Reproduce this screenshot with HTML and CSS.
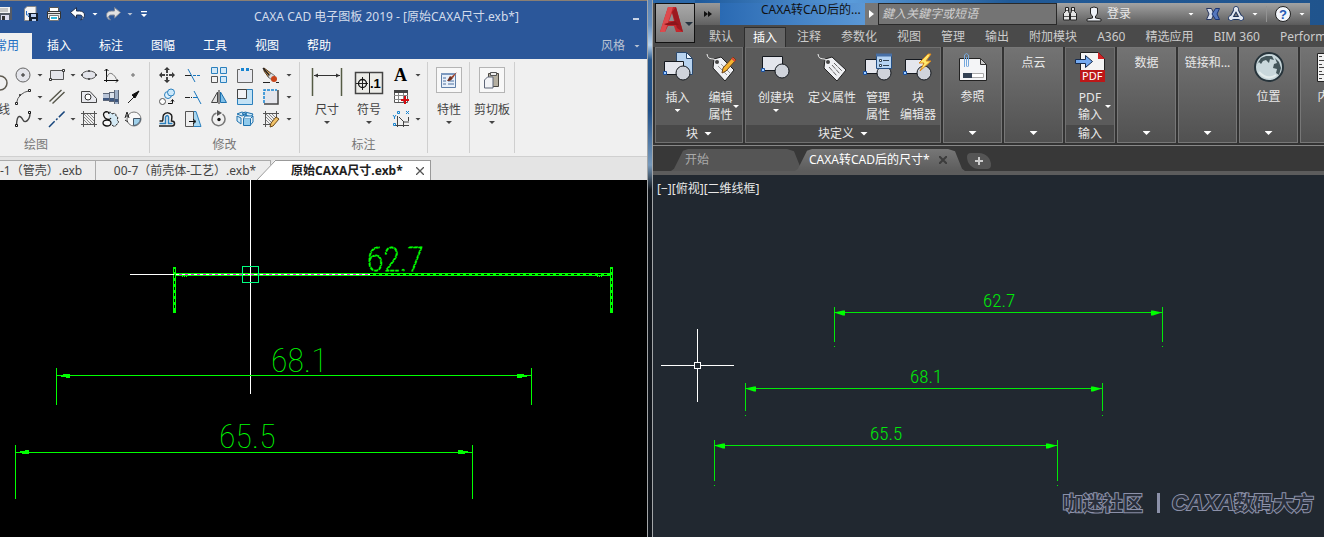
FILE: index.html
```html
<!DOCTYPE html>
<html lang="zh-CN">
<head>
<meta charset="utf-8">
<title>CAXA CAD 电子图板 2019</title>
<link rel="stylesheet" href="styles.css">
</head>
<body>
<main class="desktop">
<section class="caxa" aria-label="CAXA CAD">
  <header class="caxa-title">
    <div class="qat">
      <button class="q-save" aria-label="保存"><svg width="14" height="16" viewBox="0 0 14 16"><path d="M0 1h12v13H0z" fill="#555b66"/><path d="M0 1h10v6H0z" fill="#f2f2f2"/><path d="M1 9h8v5H1z" fill="#dde"/><path d="M2 10h3v4H2z" fill="#333"/><path d="M0 3h8M0 5h8" stroke="#999"/></svg></button>
      <button class="q-as" aria-label="另存为"><svg width="16" height="16" viewBox="0 0 16 16"><path d="M4 0.500h9v10H8v4H1.500V3z" fill="#f4f4f4" stroke="#888"/><path d="M3.500 5v4h3M5 7l2 2-2 2" fill="none" stroke="#2b6fc0"/><path d="M6 7h9v8H6z" fill="#152030"/><path d="M8 8h5v3H8zM9 13h4v2H9z" fill="#b8cdf0"/></svg></button>
      <button class="q-print" aria-label="打印"><svg width="16" height="16" viewBox="0 0 16 16"><path d="M3.500 1.500h9v4h-9z" fill="#fff" stroke="#555"/><path d="M1.500 5.500h13v7h-13z" fill="#e4e4e4" stroke="#333"/><path d="M2 7.500h12" stroke="#444"/><path d="M3.500 9.500h9v5h-9z" fill="#fff" stroke="#777"/><path d="M5 12h6" stroke="#32b7d8" stroke-width="2"/></svg></button>
      <button class="q-undo" aria-label="撤销"><svg width="16" height="16" viewBox="0 0 16 16"><path d="M0.500 6.500l6-5v3.500h3c7 0 6 8 1 9 3-3 2-5-1-5h-3v3z" fill="#fff" stroke="#1f2f4d"/></svg></button>
      <i class="dn light"></i>
      <button class="q-redo" aria-label="重做"><svg width="16" height="16" viewBox="0 0 16 16"><path d="M15.500 6.500l-6-5v3.500h-3c-7 0-6 8-1 9-3-3-2-5 1-5h3v3z" fill="#e2e2e2" stroke="#7c8698"/></svg></button>
      <i class="dn dim"></i>
      <i class="dn light bar"></i>
    </div>
    <h1 class="caxa-name">CAXA CAD 电子图板 2019 - [原始CAXA尺寸.exb*]</h1>
    <button class="minimize" aria-label="最小化"></button>
  </header>
  <nav class="caxa-menu">
    <button class="menu current">常用</button><button class="menu">插入</button><button class="menu">标注</button><button class="menu">图幅</button><button class="menu">工具</button><button class="menu">视图</button><button class="menu">帮助</button>
    <button class="style-menu">风格<i class="dn dim"></i></button>
  </nav>
  <div class="caxa-ribbon">
    <div class="group draw">
      <div class="icons draw-icons">
        <button class="line-tool"><svg width="9" height="22" viewBox="0 0 9 22"><path d="M0 4a7 7 0 0 1 0 14" fill="none" stroke="#5f5a50" stroke-width="1.500"/></svg><span>线</span></button>
        <button aria-label="圆"><svg viewBox="0 0 18 18"><circle cx="9" cy="9" r="7" fill="#e4e5eb" stroke="#666"/><path d="M8 8h2v2h-2z" fill="#fff" stroke="#222"/></svg></button><i class="dn"></i>
        <button aria-label="矩形"><svg viewBox="0 0 18 18"><path d="M2.500 4.500h13v9h-13z" fill="#e3e4ea" stroke="#555"/><path d="M14.500 3.500h2v2h-2zM1.500 12.500h2v2h-2z" fill="#fff" stroke="#333"/></svg></button><i class="dn"></i>
        <button aria-label="椭圆"><svg viewBox="0 0 18 18"><ellipse cx="9" cy="9" rx="7" ry="4" fill="#e3e4ea" stroke="#555"/><path d="M1.500 8.500h1v1h-1zM15.500 8.500h1v1h-1zM8.500 4.500h1v1h-1zM8.500 12.500h1v1h-1z" fill="#fff" stroke="#333"/></svg></button>
        <button aria-label="公式曲线"><svg viewBox="0 0 18 18"><path d="M4.500 3v13M2 14.500h14M2.500 5l2-2 2 2M14 12.500l2 2-2 2" stroke="#111" fill="none"/><path d="M5 11c2-5 5-5 9 1" stroke="#777" fill="none"/></svg></button>
        <button aria-label="点"><svg viewBox="0 0 18 18"><path d="M8 8h2v2h-2z" fill="#fff" stroke="#666"/></svg></button>
        <button aria-label="圆弧"><svg viewBox="0 0 18 18"><path d="M2.500 15Q4 5 16 2.500" stroke="#555" fill="none"/><path d="M1.500 14.500h2v2h-2zM14.500 1.500h2v2h-2zM5.500 6.500h1v1h-1z" fill="#fff" stroke="#222"/></svg></button><i class="dn"></i>
        <button aria-label="平行线"><svg viewBox="0 0 18 18"><path d="M1.500 13.500L13.500 2M4.500 15.500L16.500 4" stroke="#56564a" stroke-width="1.400"/></svg></button><i></i>
        <button aria-label="多边形"><svg viewBox="0 0 18 18"><path d="M1.500 3.500h8.500l6.500 7v4h-15z" fill="#e8e9ee" stroke="#444"/><circle cx="8" cy="9" r="3" fill="#fff" stroke="#333"/></svg></button>
        <button aria-label="轴"><svg viewBox="0 0 18 18"><path d="M1 5h6v8H1z" fill="#b9c5d8"/><path d="M7 4h5v10H7z" fill="#dbe2ec"/><path d="M12 2h5v14h-5z" fill="#9fb0c8"/><path d="M1 10h6v2H1zM7 10h5v3H7zM12 11h5v3h-5z" fill="#3e577f"/><path d="M1 5.500h6M1 12.500h6M7.500 4v10M12.500 2v14M7 4.500h5M7 13.500h5M16.500 2v14" stroke="#5c6678" fill="none"/></svg></button>
        <button aria-label="箭头"><svg viewBox="0 0 18 18"><path d="M4 15l7-7" stroke="#222"/><path d="M15 3L8 7l3 3z" fill="#111" stroke="#111"/></svg></button>
        <button aria-label="样条"><svg viewBox="0 0 18 18"><path d="M2.500 15C3 3 7 6 9 10s7 0 7-7" stroke="#444" fill="none" stroke-width="1.400"/><path d="M1.500 14.500h2v2h-2zM14.500 1.500h2v2h-2z" fill="#fff" stroke="#111"/></svg></button><i class="dn"></i>
        <button aria-label="中心线"><svg viewBox="0 0 18 18"><path d="M1 17L17 1" stroke="#16457c" stroke-width="1.500" stroke-dasharray="8 2 2 2"/></svg></button><i class="dn"></i>
        <button aria-label="填充"><svg viewBox="0 0 18 18"><path d="M3.500 1v16M14.500 1v16M1 3.500h16M1 14.500h16" stroke="#555"/><path d="M4 10l4 4M4 7l7 7M4 4l10 10M7 4l7 7M10 4l4 4" stroke="#888"/></svg></button>
        <button aria-label="局部放大"><svg viewBox="0 0 18 18"><path d="M6 3q3-2 4 1 4-2 4 2 3 1 1 4 3 2 0 4-2 4-5 1" fill="#d4e9f4" stroke="#222" stroke-dasharray="3 1"/><path d="M3 2q-3 2 0 6M3 2q4-1 4 2 M3 8q4 3 6 0" fill="none" stroke="#111" stroke-width="1.300"/><ellipse cx="5" cy="13" rx="4" ry="3" fill="#f6f6f6" stroke="#111" stroke-width="1.300"/></svg></button>
        <button aria-label="局部视图"><svg viewBox="0 0 18 18"><circle cx="10" cy="9" r="7" fill="#f8f8f8" stroke="#777"/><path d="M9.500 8.500h7a7 7 0 0 1-7 7z" fill="#9fd0ea" stroke="#456"/><path d="M1 8l2-6 2 6M2 6h3M1 10l3 2" fill="none" stroke="#222"/></svg></button>
      </div>
      <div class="group-name draw-name">绘图</div>
    </div>
    <div class="group modify">
      <div class="icons modify-icons">
        <button aria-label="平移"><svg viewBox="0 0 18 18"><path d="M9 1l3 3H6zM9 17l3-3H6zM1 9l3-3v6zM17 9l-3-3v6z" fill="#333"/><path d="M9 3v4M9 11v4M3 9h4M11 9h4" stroke="#444" stroke-width="2"/><path d="M8 8h2v2H8z" fill="#555"/></svg></button>
        <button aria-label="裁剪"><svg viewBox="0 0 18 18"><path d="M1 9.500h6" stroke="#222"/><path d="M4 3l7 13" stroke="#1976bd" fill="none"/><path d="M9 9.500h8" stroke="#1976bd" stroke-dasharray="3 1"/></svg></button>
        <button aria-label="阵列"><svg viewBox="0 0 18 18"><path d="M1.500 1.500h6v6h-6zM10.500 1.500h6v6h-6zM10.500 10.500h6v6h-6z" fill="#d3e9f8" stroke="#2b80bd"/><path d="M1.500 10.500h6v6h-6z" fill="#f3f3f3" stroke="#555"/></svg></button>
        <button aria-label="打断"><svg viewBox="0 0 18 18"><path d="M4 3.500H1.500v13h15v-13H14" fill="#e9eaef" stroke="#666"/><path d="M5 2h3v3H5zM10 2h3v3h-3z" fill="#1784d1"/></svg></button>
        <button aria-label="删除"><svg viewBox="0 0 18 18"><path d="M2 2l8 6-3 4-5-7z" fill="#dcae6c" stroke="#5b3b1a"/><path d="M1 2l7 8" stroke="#292320" stroke-width="1.500"/><path d="M9 7l4 3-3 4-4-3z" fill="#ddd" stroke="#777"/><circle cx="12" cy="13" r="3" fill="#c9451a"/><path d="M1 16.500h7M14 16.500h3" stroke="#222"/></svg></button><i class="dn"></i>
        <button aria-label="复制"><svg viewBox="0 0 18 18"><circle cx="4.500" cy="13.500" r="3" fill="#fff" stroke="#555"/><circle cx="10" cy="7" r="3.500" fill="#e0f1fc" stroke="#2b80bd"/><circle cx="13" cy="4.500" r="3.500" fill="#cce8fa" stroke="#2b80bd"/><path d="M10 15.500h4.500V12M13 13.500l1.500-2 1.500 2" stroke="#111" fill="none"/></svg></button>
        <button aria-label="延伸"><svg viewBox="0 0 18 18"><path d="M1 9.500h7" stroke="#222" stroke-dasharray="5 1"/><path d="M10 3l7 13" stroke="#1976bd"/><path d="M9 9.500h4" stroke="#1976bd"/></svg></button>
        <button aria-label="镜像"><svg viewBox="0 0 18 18"><path d="M7.500 4v10.500h-6z" fill="#e2e2e2" stroke="#444"/><path d="M10.500 4v10.500h6z" fill="#7fbfe8" stroke="#1c70ad"/><path d="M9 2v14" stroke="#222"/></svg></button>
        <button aria-label="缩放"><svg viewBox="0 0 18 18"><path d="M1.500 1.500h15v15h-15z" fill="#c3e2f5" stroke="#2b80bd"/><path d="M1.500 1.500h9v9h-9z" fill="#f2f2f4" stroke="#444"/></svg></button>
        <button aria-label="拉伸"><svg viewBox="0 0 18 18"><path d="M2.500 2.500h13v13h-13z" fill="#e5e6ec"/><path d="M16 2v14H2" fill="none" stroke="#444" stroke-width="1.500"/><path d="M2 15V2h13" fill="none" stroke="#1784d1" stroke-width="1.500" stroke-dasharray="3 1"/></svg></button><i class="dn"></i>
        <button aria-label="等距"><svg viewBox="0 0 18 18"><path d="M1.500 11h3c1-2 0-4 1-6 2-3 6-3 8 0 1 2 0 4 0 6q3 0 3 2.500T14 16H1" fill="none" stroke="#222" stroke-width="1.500"/><path d="M1.500 13.500h6V7q2-3 3 0v6.500h4" fill="none" stroke="#2b80bd" stroke-width="1.500"/></svg></button>
        <button aria-label="拉长"><svg viewBox="0 0 18 18"><path d="M9 1.500h3l5 15H9z" fill="#a8d7f1" stroke="#2b80bd"/><path d="M1.500 1.500h8v15h-8z" fill="#eee" stroke="#555"/><path d="M5 11.500h6M9 9l3 2.500-3 2.500" stroke="#111" fill="none"/></svg></button>
        <button aria-label="旋转"><svg viewBox="0 0 18 18"><path d="M6.500 3a6.500 6.500 0 1 0 6 1" fill="none" stroke="#777" stroke-width="1.500"/><path d="M7 0l5 3-5 3z" fill="#555"/><circle cx="9" cy="9.500" r="1.700" fill="#111"/></svg></button>
        <button aria-label="分解"><svg viewBox="0 0 18 18"><path d="M1 6l4 2v6l-4-3zM6 4l3-2 8 2-2 3zM1 4l5-2 5 2-5 2z" fill="#cfe8f7" stroke="#1c70ad"/><path d="M7.500 8.500h7v7h-7z" fill="#8fcaec" stroke="#1c70ad"/><path d="M7.500 8.500L9 6h8l-2.500 2.500M17 6v6l-2.500 3" fill="#e4f3fc" stroke="#1c70ad"/></svg></button>
        <button aria-label="填充编辑"><svg viewBox="0 0 18 18"><path d="M3.500 1v16M14.500 1v8M1 3.500h16M1 14.500h8" stroke="#555"/><path d="M4 10l4 4M4 7l6 6M4 4l8 8M7 4l6 6M10 4l4 4" stroke="#888"/><path d="M14 7l3 2-6 7-3 1 1-4z" fill="#f1c267" stroke="#6b4818"/></svg></button><i class="dn"></i>
      </div>
      <div class="group-name">修改</div>
    </div>
    <div class="group note">
      <div class="note-row">
        <button class="big"><svg width="34" height="32" viewBox="0 0 34 32"><path d="M2.500 2v28M31.500 2v28" stroke="#555b45" stroke-width="1.500"/><path d="M4 9.500h26" stroke="#333"/><path d="M4 9.500l4-2v4zM30 9.500l-4-2v4z" fill="#333"/></svg><span>尺寸</span><i class="dn"></i></button>
        <button class="big"><svg width="30" height="32" viewBox="0 0 30 32"><path d="M1.500 6.500h27v21h-27z" fill="#ecece8" stroke="#444" stroke-width="1.500"/><path d="M15.500 7v20M2 17.500h12M8.500 11v13" stroke="#222"/><circle cx="8.500" cy="17.500" r="4" fill="none" stroke="#111" stroke-width="1.300"/><text class="tol" x="16" y="22">.1</text></svg><span>符号</span><i class="dn"></i></button>
        <div class="note-icons">
          <button aria-label="文字"><svg viewBox="0 0 18 18"><text class="serif-a" x="2" y="15">A</text></svg></button><i class="dn"></i>
          <button aria-label="表格"><svg viewBox="0 0 18 18"><path d="M2.500 2.500h13v12h-13z" fill="#fff" stroke="#555"/><path d="M2 3.500h14" stroke="#444" stroke-width="3"/><path d="M2 7.500h14M2 11.500h14M6.500 5v9M11.500 5v9" stroke="#888"/><path d="M13 8v8M9 12h8" stroke="#d50d12" stroke-width="2"/></svg></button><i></i>
          <button aria-label="坐标标注"><svg viewBox="0 0 18 18"><path d="M5.500 6v11M2 15.500h15M7 7l5 5h5M11.500 12v5M16.500 7v4" stroke="#444" fill="none"/><path d="M5.500 1.500h2v2h-2zM14 1l3 3m0-3l-3 3M1 5l1.500 2L4 5M2.500 7v2M1.500 13.500h2v2h-2z" stroke="#1784d1" fill="none"/></svg></button><i class="dn"></i>
        </div>
      </div>
      <div class="group-name">标注</div>
    </div>
    <div class="group prop">
      <button class="big"><span class="framed"><svg width="24" height="24" viewBox="1 1 24 24"><path d="M5.500 6.500h14v14h-14z" fill="#e8f0fa" stroke="#5f7fa8"/><path d="M5 7h15" stroke="#7c99bf" stroke-width="2"/><path d="M7 11h3M7 14h3M7 17h3M12 14h6M12 17h6" stroke="#4d70a0"/><path d="M21 5l-6 5 2 1 4-6z" fill="#a34024"/><path d="M14 9l3 2c-2 3-4 3-6 3z" fill="#6f3020"/></svg></span><span>特性</span><i class="dn"></i></button>
    </div>
    <div class="group clip">
      <button class="big"><span class="framed"><svg width="24" height="24" viewBox="1 1 24 24"><path d="M9.500 6.500h10v13h-10z" fill="#b5afa0" stroke="#4a4741"/><path d="M11.500 5.500h6v3h-6z" fill="#eee" stroke="#555"/><path d="M5.500 13l3-3h5.500v11H5.500z" fill="#f2f3f6" stroke="#5f6678"/></svg></span><span>剪切板</span><i class="dn"></i></button>
    </div>
  </div>
  <nav class="caxa-docs">
    <button class="doc first">-1（管壳）.exb</button>
    <button class="doc second">00-7（前壳体-工艺）.exb*</button>
    <div class="doc-active"><svg class="slant" width="18" height="20" viewBox="0 0 18 20"><path d="M0 20L18 0v20z" fill="#fff"/><path d="M0 20L18 1" stroke="#999"/></svg><span class="doc-text">原始CAXA尺寸.exb*</span><button class="close" aria-label="关闭"><svg width="8" height="8" viewBox="0 0 8 8"><path d="M0 0l8 8M8 0L0 8" stroke="#555" stroke-width="1.300"/></svg></button></div>
  </nav>
  <div class="caxa-canvas">
    <svg class="scene" aria-label="CAXA 图纸"><g transform="translate(0 -180)" class="crisp">
      <path class="sel" d="M173 274.500H613M174.500 267V313M611.500 267V313"/>
      <path class="sel-gap" d="M370 274.500H610M174.500 269V311M611.500 269V311"/>
      <path d="M176 274.500H370" stroke="#f0f"/><path d="M176 274.500H370" stroke="#fff" stroke-dasharray="3 3"/>
      <path d="M182 276.500h6M597 276.500h5" stroke="#0f0" stroke-dasharray="1 1"/>
      <path d="M130 274.500H174M250.500 180V394" stroke="#fff"/>
      <path d="M242.500 266.500h16v16h-16z" fill="none" stroke="#00ff80"/>
      <path class="green" d="M56.500 368V405M531.500 368V405M57 375.500H531M15.500 445V499M472.500 445V499M16 452.500H472"/>
      <path d="M61 375h2v-1h7v4h-4v-1h-5zM527 375h-3v-1h-7v4h5v-1h5zM20 451h5v-1h4v4h-7v-1h-2zM468 451h-5v-1h-5v4h7v-1h3z" fill="#0f0"/>
      </g><g transform="translate(0 -180)">
      <text class="dim-l selected" x="367" y="271">62.7</text>
      <text class="dim-l" x="271" y="372">68.1</text>
      <text class="dim-l" x="219" y="448">65.5</text>
    </g></svg>
  </div>
</section>

<section class="acad" aria-label="AutoCAD">
  <div class="glass"></div>
  <div class="acad-body">
  <header class="acad-head">
    <button class="app" aria-label="应用程序菜单"><svg width="38" height="38" viewBox="0 0 38 38"><path d="M12 3h8l7 25h-7l-2-6H12l-3 6H4z" fill="#c4272c"/><path d="M12 3h5L9 28H4z" fill="#dd4a4d"/><path d="M16 9l2 8h-5z" fill="#8f8f8f"/><path d="M20 3l7 25-6-4-5-16z" fill="#9c191f"/><path d="M8 20l11-3 4 4H10z" fill="#8d151b"/><path d="M29 18h8l-4 4z" fill="#26333f"/></svg></button>
    <div class="acad-title">
      <button class="more" aria-label="更多"><svg width="8" height="6" viewBox="0 0 8 6"><path d="M0 0l4 3-4 3zM4 0l4 3-4 3z" fill="#111"/></svg></button>
      <span class="acad-name">CAXA转CAD后的...</span>
      <button class="expand" aria-label="展开"><svg width="5" height="8" viewBox="0 0 5 8"><path d="M0 0l5 4-5 4z" fill="#fff"/></svg></button>
      <input class="search" type="text" aria-label="搜索" placeholder="鍵入关鍵字或短语">
      <div class="info">
        <button aria-label="搜索"><svg width="16" height="16" viewBox="0 0 16 16"><path d="M3.500 1.500h3v4l1 2v6.500h-6V7.500l2-2zM9.500 1.500h3v4l2 2v6.500h-6V7.500l1-2z" fill="#e4e4e4" stroke="#222"/><path d="M2 10.500h5M9 10.500h5M4 4.500h2M10 4.500h2" stroke="#555"/></svg></button>
        <button class="signin"><svg width="16" height="16" viewBox="0 0 16 16"><path d="M4.500 2q3.500-2 7 0v5q0 2-2 3v2l5.500 1v2H1v-2l5.500-1v-2q-2-1-2-3z" fill="#eef1f7" stroke="#222"/></svg>登录</button>
        <i class="dn light signin-dn"></i>
        <button aria-label="Exchange"><svg width="14" height="14" viewBox="0 0 14 14"><path d="M0.500 1.500h5L8 7l-2.500 5.500h-5L3 7z" fill="#d6deed" stroke="#28365e"/><path d="M13.500 1.500h-4L6 7l3.500 5.500h4L11 7z" fill="#5577bd" stroke="#19336f"/></svg></button>
        <button aria-label="A360"><svg width="16" height="16" viewBox="0 0 16 16"><path d="M8 3l5 9H3z" fill="none" stroke="#1d3258" stroke-width="4"/><circle cx="8" cy="3" r="2.500" fill="#fff" stroke="#28406d"/><circle cx="3" cy="12" r="2.500" fill="#fff" stroke="#28406d"/><circle cx="13" cy="12" r="2.500" fill="#fff" stroke="#28406d"/><path d="M8 3l5 9H3z" fill="none" stroke="#e1e8f3" stroke-width="2"/></svg></button>
        <i class="dn light"></i><i class="info-line"></i>
        <button aria-label="帮助"><svg width="16" height="16" viewBox="0 0 16 16"><circle cx="8" cy="8" r="7.500" fill="#f2f5fb" stroke="#222"/><text class="help" x="4" y="13">?</text></svg></button>
        <i class="dn light"></i>
      </div>
    </div>
    <nav class="acad-tabs"><button>默认</button><button class="on">插入</button><button>注释</button><button>参数化</button><button>视图</button><button>管理</button><button>输出</button><button>附加模块</button><button>A360</button><button>精选应用</button><button>BIM 360</button><button>Performance</button></nav>
  </header>
  <div class="acad-ribbon">
    <div class="panel open block">
      <div class="tools">
        <button class="tool w43"><svg width="32" height="32" viewBox="0 0 32 32"><path d="M14.500 1.500h10l6 6v16h-16z" fill="#b8d3ef" stroke="#2d4a6d"/><path d="M24.500 1.500v6h6z" fill="#eef5fd" stroke="#2d4a6d"/><path d="M2.500 10.500h19v13h-19z" fill="#e4e6ed" stroke="#15191f"/><path d="M1.500 20.500h3v3h-3z" fill="#9dcbff" stroke="#1b4f9c"/><circle cx="21" cy="22" r="7" fill="#cfd3db" stroke="#15191f"/></svg><span>插入</span><i class="dn light"></i></button>
        <button class="tool side w43"><svg width="32" height="32" viewBox="0 0 32 32"><path d="M9 8l7-2 13 13-9 11L8 17z" fill="#eff0f3" stroke="#222"/><path d="M2 3c1 8 7 2 10 8" fill="none" stroke="#eee"/><circle cx="12" cy="11" r="2" fill="#444"/><path d="M13 15l9 9M16 13l9 9" stroke="#999"/><path d="M28 6l3 3-10 11-4 2 1-5z" fill="#f4b22f" stroke="#684017"/><path d="M27 7l3 3" stroke="#db4638" stroke-width="2"/></svg><span>编辑<br>属性</span><i class="dn light"></i></button>
      </div><button class="foot">块<i class="dn wide light"></i></button>
    </div>
    <div class="panel open define">
      <div class="tools">
        <button class="tool w60"><svg width="32" height="32" viewBox="0 0 32 32"><path d="M2.500 5.500h20v14h-20z" fill="#e4e6ed" stroke="#15191f"/><path d="M1.500 17.500h3v3h-3z" fill="#9dcbff" stroke="#1b4f9c"/><circle cx="22" cy="20" r="7" fill="#cfd3db" stroke="#15191f"/></svg><span>创建块</span><i class="dn light"></i></button>
        <button class="tool w52"><svg width="32" height="32" viewBox="0 0 32 32"><path d="M9 8l7-2 14 13-9 11L8 17z" fill="#eff0f3" stroke="#222"/><path d="M2 3c1 8 7 2 10 8" fill="none" stroke="#eee"/><circle cx="12" cy="11" r="2" fill="#444"/><path d="M13 16l8 9M16 14l8 9M18 12l8 8" stroke="#666" stroke-dasharray="5 1"/></svg><span>定义属性</span></button>
        <button class="tool w40"><svg width="32" height="32" viewBox="0 0 32 32"><path d="M3.500 8.500h17v14h-17z" fill="#e4e6ed" stroke="#15191f"/><path d="M1.500 20.500h3v3h-3z" fill="#9dcbff" stroke="#1b4f9c"/><circle cx="22" cy="22" r="7" fill="#cfd3db" stroke="#15191f"/><path d="M14.500 3.500h15v14h-15z" fill="#b6d4f3" stroke="#254f84"/><path d="M14 4h16" stroke="#476fa5" stroke-width="3"/><path d="M17.500 8.500h2v2h-2zM17.500 13.500h2v2h-2z" fill="#fff" stroke="#345"/><path d="M21 9.500h6M21 14.500h6" stroke="#345"/></svg><span>管理<br>属性</span></button>
        <button class="tool w40"><svg width="32" height="32" viewBox="0 0 32 32"><path d="M3.500 8.500h18v14h-18z" fill="#e4e6ed" stroke="#15191f"/><path d="M1.500 20.500h3v3h-3z" fill="#9dcbff" stroke="#1b4f9c"/><circle cx="22" cy="22" r="7" fill="#cfd3db" stroke="#15191f"/><path d="M26 3l-9 9h5l-4 8 11-10h-5l5-7z" fill="#ffe86c" stroke="#db881e"/></svg><span>块<br>编辑器</span></button>
      </div><button class="foot">块定义<i class="dn wide light"></i></button>
    </div>
    <button class="panel shut"><svg width="32" height="32" viewBox="0 0 32 32"><path d="M2.500 6.500h21l6 6v16h-27z" fill="#f4f5f7" stroke="#222"/><path d="M23.500 6.500v6h6z" fill="#ccc" stroke="#333"/><path d="M6.500 21.500h20v4h-20z" fill="#fff" stroke="#aaa"/><path d="M6 21h9v5H6z" fill="#334154"/><path d="M7.500 15V3q2-3 4 0v11q-1 2-2 0V5" fill="none" stroke="#75a8dd"/></svg><span>参照</span><i class="dn wide light"></i></button>
    <button class="panel shut"><span>点云</span><i class="dn wide light"></i></button>
    <div class="panel open pdf">
      <div class="tools"><button class="tool side w48"><svg width="32" height="32" viewBox="0 0 32 32"><path d="M6.500 1.500h18l6 6v22h-24z" fill="#f4f4f4" stroke="#222"/><path d="M24 1v7h7z" fill="#d32124"/><path d="M6 19h25v12H6z" fill="#bd1718"/><text class="pdf-text" x="8" y="29">PDF</text><path d="M1.500 8.500h10v-4l7 6-7 6v-4h-10z" fill="#73a9f1" stroke="#172b4d"/></svg><span>PDF<br>输入</span><i class="dn light"></i></button></div>
      <button class="foot">输入</button>
    </div>
    <button class="panel shut"><span>数据</span><i class="dn wide light"></i></button>
    <button class="panel shut"><span>链接和...</span><i class="dn wide light"></i></button>
    <button class="panel shut"><svg width="32" height="32" viewBox="0 0 32 32"><circle cx="16" cy="15" r="14" fill="#c9d8dc" stroke="#27343b" stroke-width="2"/><path d="M4 12l4-6 5-2 6 0 2 4-4-1-1 4-3-3-3 1-2 3-2-2zM22 6l4 4 2 6-2 7-3-2 1-4-4-1 1-4 3-1z" fill="#44565b"/><path d="M6 20q8 9 17 3" fill="none" stroke="#e4eded" stroke-width="2"/></svg><span>位置</span><i class="dn wide light"></i></button>
    <button class="panel shut"><svg width="32" height="32" viewBox="0 0 32 32"><path d="M3.500 1.500h25v28h-25z" fill="#f2f2f2" stroke="#222"/><path d="M5 4.500h3M5 8.500h5M5 12.500h3M5 15.500h5M5 19.500h3M5 22.500h5M5 26.500h3M10 4.500h14M10 12.500h14M10 19.500h14M10 26.500h14" stroke="#444"/></svg><span>内容</span><i class="dn wide light"></i></button>
  </div>
  <nav class="acad-docs">
    <button class="file start">开始</button>
    <div class="file current-file"><span>CAXA转CAD后的尺寸*</span><button class="close" aria-label="关闭"><svg width="8" height="8" viewBox="0 0 8 8"><path d="M0 0l8 8M8 0L0 8" stroke="#3c3c3c" stroke-width="2"/></svg></button></div>
    <button class="plus" aria-label="新建"><svg width="8" height="8" viewBox="0 0 8 8"><path d="M4 0v8M0 4h8" stroke="#ccc" stroke-width="2"/></svg></button>
  </nav>
  <div class="acad-canvas">
    <svg class="scene" aria-label="AutoCAD 图纸"><g transform="translate(-653 -175)" class="crisp">
      <path d="M661 365.500H694M701 365.500H734M697.500 329V362M697.500 369V402M694.500 362.500h6v6h-6z" fill="none" stroke="#fff"/>
      <path class="green-r" d="M834.500 307V342M1162.500 307V342M835 312.500H1162M745.500 383V411M1102.500 383V411M746 388.500H1102M714.500 440V481M1057.500 440V481M715 445.500H1057"/>
      <path class="green-r" d="M834 346.500h1M1162 346.500h1M745 415.500h1M1102 415.500h1M714 485.500h1M1057 485.500h1"/>
      </g><g transform="translate(-653 -175)"><path d="M834 312.500l9-2h2v5h-2zM1162 312.500l-9-2h-2v5h2zM745 388.500l9-2h2v5h-2zM1102 388.500l-9-2h-2v5h2zM714 445.500l9-2h2v5h-2zM1057 445.500l-9-2h-2v5h2z" fill="#0f0"/>
      <text class="dim-r" x="983" y="307">62.7</text><text class="dim-r" x="910" y="383">68.1</text><text class="dim-r" x="870" y="440">65.5</text>
    </g></svg>
    <div class="view-label">[−][俯视][二维线框]</div>
    <div class="watermark">咖迷社区<span class="wm-bar"></span><em>CAXA</em>数码大方</div>
  </div>
  </div>
</section>
</main>
</body>
</html>
```

FILE: styles.css
```css
* { box-sizing: border-box; }
body { margin: 0; font: 12px/16px "Noto Sans", "Noto Sans CJK SC", sans-serif; }
button { font: inherit; color: inherit; background: none; border: 0; padding: 0; margin: 0; white-space: nowrap; }
svg { display: block; flex: none; }
i { display: block; flex: none; }
.desktop { display: grid; grid-template-columns: 647fr 677fr; height: 100vh; min-height: 400px; overflow: hidden; }
.caxa, .acad-body { display: flex; flex-direction: column; min-width: 0; overflow: hidden; }
.acad { display: flex; min-width: 0; }
.dn { width: 6px; height: 3px; background: #444; clip-path: polygon(0 0, 100% 0, 50% 100%); }
.dn.light { background: #fff; }
.dn.dim { background: #b9c3d3; }
.dn.wide { width: 8px; height: 4px; }
.dn.bar { height: 6px; clip-path: polygon(0 0, 100% 0, 100% 20%, 0 20%, 0 50%, 100% 50%, 50% 100%, 0 50%); }

.caxa-title { display: flex; align-items: center; height: 33px; flex: none; border-top: 1px solid #8a7f74; background: #2b579a; color: #d3dceb; }
.qat { display: flex; align-items: center; width: 150px; height: 26px; align-self: flex-start; }
.q-as { margin-left: 9px; }
.q-print { margin-left: 7px; }
.q-undo { margin-left: 8px; margin-right: 6px; }
.q-redo { margin-left: 7px; margin-right: 6px; }
.qat .bar { margin-left: 8px; }
.caxa-name { flex: 1; margin: 0; font: inherit; text-align: center; white-space: nowrap; }
.minimize { width: 6px; height: 2px; background: #c9d4e6; margin: 4px 8px 0 10px; }
.caxa-menu { display: flex; height: 26px; flex: none; background: #2b579a; color: #fff; }
.menu { width: 52px; }
.menu.current { width: 32px; margin-right: 1px; display: flex; justify-content: flex-end; align-items: center; padding-right: 13px; background: #f0f0f0; color: #1f6fc4; }
.style-menu { display: flex; align-items: center; gap: 9px; margin-left: auto; padding-right: 7px; color: #b9c3d3; }

.caxa-ribbon { display: flex; flex: none; height: 98px; padding: 3px 0; background: #f0f0f0; color: #444; border-bottom: 1px solid #d0d0d0; }
.group { position: relative; display: flex; flex-direction: column; border-right: 1px solid #cfcfcf; }
.icons { display: grid; grid-template-rows: repeat(3, 22px); align-items: center; justify-items: center; padding-top: 2px; }
.icons svg[viewBox="0 0 18 18"], .note-icons svg { width: 18px; height: 18px; }
.draw { width: 150px; }
.draw-icons { grid-template-columns: 12px 22px 12px 22px 10px 22px 22px 22px; }
.line-tool { grid-row: 1 / 4; justify-self: start; width: 12px; height: 66px; display: flex; flex-direction: column; align-items: flex-start; padding-top: 8px; gap: 8px; }
.line-tool span { width: 10px; display: flex; justify-content: flex-end; }
.modify { width: 150px; }
.modify-icons { grid-template-columns: repeat(5, 26px) 10px; padding-left: 4px; }
.group-name { padding-top: 7px; text-align: center; color: #777; }
.draw-name { padding-right: 77px; }
.note { width: 128px; }
.note-row { display: flex; height: 68px; padding-left: 6px; }
.big { display: flex; flex-direction: column; align-items: center; width: 42px; }
.big > svg { margin: 4px 0; }
.framed { padding: 1px; border: 1px solid #b5b5b5; background: #f8f8f8; margin: 4px 0 8px; }
.framed svg { margin: -1px; }
.prop .framed, .clip .framed { width: 26px; height: 26px; padding: 1px; margin: 5px 0 9px; }
.big .dn { margin-top: 3px; }
.note-icons { display: grid; grid-template-columns: 22px 12px; grid-template-rows: repeat(3, 22px); align-items: center; justify-items: center; padding-top: 2px; }
.tol { font: bold 13px "Liberation Sans", sans-serif; }
.serif-a { font: bold 18px "Liberation Serif", serif; }
.prop { width: 42px; }
.clip { width: 45px; align-items: center; }

.caxa-docs { display: flex; align-items: flex-end; height: 23px; flex: none; background: #e4e4e4; color: #444; }
.doc { height: 20px; background: #ededed; border: 1px solid #aaa; border-bottom: 0; border-left: 0; }
.first { width: 96px; text-align: left; }
.second { width: 175px; padding-left: 4px; }
.doc-active { display: flex; align-items: center; height: 20px; width: 174px; margin-left: -14px; color: #222; font-weight: bold; }
.slant { align-self: stretch; }
.doc-text { flex: 1; height: 20px; line-height: 20px; padding-left: 16px; background: #fff; border-top: 1px solid #999; white-space: nowrap; }
.doc-active .close { height: 20px; padding: 0 6px; background: #fff; border: 1px solid #999; border-width: 1px 1px 0 0; }
.caxa-canvas, .acad-canvas { position: relative; flex: 1; min-height: 0; overflow: hidden; }
.caxa-canvas { background: #000; }
.scene { position: absolute; inset: 0; width: 100%; height: 100%; }
.crisp { shape-rendering: crispEdges; }
.sel { stroke: #0f0; stroke-width: 3; fill: none; }
.sel-gap { stroke: #000; stroke-dasharray: 3 3; fill: none; }
.green { stroke: #0f0; fill: none; }
.green-r { stroke: #00ea08; fill: none; }
.dim-l { font: 100 34px "Roboto Condensed", "Open Sans Condensed", "Noto Sans Condensed", "Noto Sans CJK SC", sans-serif; fill: #0f0; }
.dim-l.selected { fill: #000; stroke: #0f0; stroke-width: 1px; stroke-dasharray: 4 1; }
.dim-r { font: 300 19px "Roboto Condensed", "Open Sans Condensed", "Noto Sans Condensed", "Noto Sans CJK SC", sans-serif; fill: #00ea08; }

.glass { width: 6px; flex: none; border: 1px solid #a3a6a8; border-width: 0 1px; background: linear-gradient(#5a83b5 0, #6b93c2 25px, #b9d4ef 45px, #27578d 60px, #1f4f88 110px, #7799bb 165px, #10151b 190px, #10151b 100%); }
.acad-body { flex: 1; background: #383838; color: #e8e8e8; }
.acad-head { display: grid; grid-template: 27px 20px / 42px 1fr; flex: none; background: linear-gradient(#2a67a8 0 3px, #4a4a4a 3px); }
.app { grid-row: 1 / 3; width: 40px; height: 40px; margin: 3px 0 0 2px; border: 1px solid #111; background: linear-gradient(#a8a8a8, #777); }
.acad-title { display: flex; min-width: 0; height: 25px; padding-top: 3px; background: linear-gradient(90deg, #1d599b, #5a9bda 25%, #215a97 50%, #20548d); }
.more { width: 25px; display: flex; align-items: center; justify-content: center; background: linear-gradient(#999, #606060); }
.acad-name { flex: 0 0 145px; padding-left: 41px; line-height: 14px; color: #111; white-space: nowrap; background: linear-gradient(90deg, #2a6ab3, #5b98d6); }
.expand { width: 13px; display: flex; align-items: center; justify-content: center; background: #777; }
.search { width: 179px; min-width: 60px; padding: 0 3px; border: 1px solid #292929; background: #747474; color: #ddd; font: italic 12px/16px "Noto Sans", "Noto Sans CJK SC", sans-serif; }
.search::placeholder { color: #d0d0d0; opacity: 1; }
.info { flex: 0 0 253px; display: flex; align-items: center; gap: 8px; padding: 0 5px; background: linear-gradient(#a3a3a3, #5b5b5b); }
.signin { display: flex; align-items: center; gap: 5px; }
.signin-dn { margin-left: auto; margin-right: 4px; }
.info-line { width: 1px; height: 16px; background: #929292; }
.help { font: bold 13px "Liberation Sans", sans-serif; fill: #2459b4; }
.acad-tabs { display: flex; min-width: 0; overflow: hidden; padding-left: 4px; color: #ccc; background: #4a4a4a; }
.acad-tabs button { flex: none; padding: 0 10px; }
.acad-tabs .on { padding: 0 8px; margin: 0 1px; border: 1px solid #2d2d2d; border-bottom: 0; background: #656565; color: #fff; }
.acad-ribbon { display: flex; gap: 2px; height: 99px; flex: none; padding: 0 0 2px 2px; overflow: hidden; background: #333; border-bottom: 1px solid #888; }
.panel { flex: none; display: flex; flex-direction: column; border: 1px solid #707070; background: #5b5b5b; }
.block { width: 88px; }
.define { width: 196px; }
.pdf { width: 50px; }
.tools { display: flex; flex: 1; }
.tool { display: flex; flex-direction: column; align-items: center; position: relative; padding-top: 3px; }
.tool span { margin-top: 6px; line-height: 17px; }
.tool .dn { margin-top: 3px; }
.tool.side .dn { position: absolute; right: 3px; top: 57px; margin: 0; }
.w40 { width: 40px; } .w43 { width: 43px; } .w48 { width: 48px; } .w52 { width: 52px; } .w60 { width: 60px; }
.foot { height: 17px; display: flex; align-items: center; justify-content: center; gap: 6px; background: #494949; }
.shut { width: 59px; align-items: center; padding: 4px 0 7px; background: linear-gradient(#737373, #515151); border-color: #777; }
.shut svg { margin-bottom: 2px; }
.shut span { margin-top: 3px; }
.shut .dn { margin-top: auto; }
.pdf-text { font: 11px "Noto Sans", sans-serif; fill: #fff; }
.acad-docs { display: flex; align-items: flex-end; height: 29px; flex: none; padding-left: 18px; background: #383838; border-bottom: 4px solid #5c5c5c; }
.file { display: flex; align-items: center; height: 22px; border-radius: 10px 14px 0 0; clip-path: polygon(0 100%, 3px 90%, 12px 8%, 17px 0, calc(100% - 17px) 0, calc(100% - 10px) 10%, calc(100% - 3px) 90%, 100% 100%); }
.start { width: 133px; padding-left: 14px; background: #555; color: #aaa; }
.current-file { width: 170px; padding: 0 18px 0 14px; justify-content: space-between; margin-left: -9px; background: linear-gradient(#777, #5c5c5c); color: #fff; white-space: nowrap; }
.plus { width: 24px; height: 16px; margin: 0 0 2px 2px; display: flex; align-items: center; justify-content: center; border-radius: 4px 12px 4px 12px; background: #555; }
.acad-canvas { background: #212830; }
.view-label { padding: 6px 4px; }
.watermark { position: absolute; right: 10px; bottom: 20px; display: flex; align-items: center; font: 700 20px/28px "Noto Sans CJK SC", sans-serif; color: #2a303c; -webkit-text-stroke: 2px #8c91a9; paint-order: stroke fill; white-space: nowrap; }
.watermark em { font-family: "Liberation Sans", sans-serif; font-size: 22px; }
.wm-bar { width: 3px; height: 20px; background: #8c91a9; margin: 0 12px 0 14px; }
```
